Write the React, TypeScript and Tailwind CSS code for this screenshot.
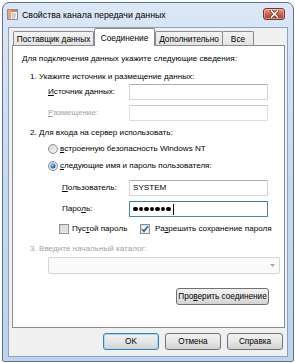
import React from "react";

const F = { fontFamily: '"Liberation Sans", Arial, sans-serif' };

function U({ c }: { c: string }) {
  return <span className="underline underline-offset-[1px] decoration-[1px]">{c}</span>;
}

function TextBox({ children, focused, disabled }: { children?: React.ReactNode; focused?: boolean; disabled?: boolean }) {
  const b = focused
    ? "border-[#4a86b8] border-t-[#3d7bad]"
    : disabled
    ? "border-[#dcdee3] border-t-[#c9cbd1]"
    : "border-[#d2d5db] border-t-[#abadb3]";
  return (
    <div className={`h-[16px] w-[139px] bg-white border ${b} flex items-center pl-[3px] rounded-[1px]`}>
      {children}
    </div>
  );
}

function Radio({ checked }: { checked?: boolean }) {
  return (
    <svg width="10" height="10" viewBox="0 0 10 10" className="shrink-0">
      <defs>
        <linearGradient id="rgbg" x1="0" y1="0" x2="1" y2="1">
          <stop offset="0" stopColor="#d0d0d0" />
          <stop offset="1" stopColor="#f8f8f8" />
        </linearGradient>
        <radialGradient id="rdot" cx="0.4" cy="0.35" r="0.7">
          <stop offset="0" stopColor="#a9d4f7" />
          <stop offset="0.5" stopColor="#3b7fce" />
          <stop offset="1" stopColor="#1c4f95" />
        </radialGradient>
      </defs>
      <circle cx="5" cy="5" r="4.5" fill="url(#rgbg)" stroke="#8e8f8f" strokeWidth="1" />
      {checked && <circle cx="5" cy="5" r="2.5" fill="url(#rdot)" />}
    </svg>
  );
}

function Check({ checked }: { checked?: boolean }) {
  return (
    <svg width="10" height="10" viewBox="0 0 10 10" className="shrink-0">
      <defs>
        <linearGradient id="cbg" x1="0" y1="0" x2="1" y2="1">
          <stop offset="0" stopColor="#cfcfcf" />
          <stop offset="1" stopColor="#f4f4f4" />
        </linearGradient>
      </defs>
      <rect x="0.5" y="0.5" width="9" height="9" fill="url(#cbg)" stroke="#8e8f8f" />
      <rect x="2" y="2" width="6" height="6" fill={checked ? "#eef3fa" : "#e0e0e0"} />
      {checked && <path d="M2.2 5.2 L4 7.2 L7.9 2.2" fill="none" stroke="#2d5fa4" strokeWidth="1.6" />}
    </svg>
  );
}

function Button({ children, def, className }: { children: React.ReactNode; def?: boolean; className?: string }) {
  return (
    <div
      className={`h-[17px] rounded-[3px] border ${
        def ? "border-[#3c7fb1] shadow-[inset_0_0_0_1px_#a8d8f6]" : "border-[#707070]"
      } bg-gradient-to-b from-[#f2f2f2] via-[#e6e6e6] to-[#d2d2d2] flex items-center justify-center text-[8.2px] leading-[10px] text-black ${className ?? ""}`}
    >
      {children}
    </div>
  );
}

function Tab({ label, selected, w }: { label: string; selected?: boolean; w: string }) {
  if (selected) {
    return (
      <div className={`relative z-10 h-[18px] -mb-[1px] ${w} border border-b-0 border-[#898c95] bg-white rounded-t-[2px] flex items-start pt-[4px] justify-center text-[8.3px] leading-[10px]`}>
        {label}
      </div>
    );
  }
  return (
    <div className={`h-[14px] ${w} border border-b-0 border-[#898c95] bg-gradient-to-b from-[#f3f3f3] to-[#e3e3e3] rounded-t-[2px] flex items-center justify-center text-[8.3px] leading-[10px]`}>
      {label}
    </div>
  );
}

export default function App() {
  return (
    <div className="w-[295px] h-[363px] bg-white overflow-hidden text-black" style={F}>
      <div className="ml-[2px] mt-[2px] w-[292px] h-[360px] rounded-t-[7px] rounded-b-[2px] border border-[#5d728d] bg-gradient-to-b from-[#dbe7f5] via-[#c7d9ef] to-[#bed3ec] flex flex-col">
        {/* Title bar */}
        <div className="h-[24px] flex items-start pl-[4px] pr-[8px]">
          <svg width="11" height="11" viewBox="0 0 11 11" className="mt-[6px] shrink-0">
            <rect x="0.5" y="0.5" width="10" height="10" fill="#fbfbfb" stroke="#8a8f99" />
            <rect x="1" y="1" width="9" height="2" fill="#e7804a" />
            <rect x="1" y="1" width="3" height="9" fill="#f0a46a" />
            <line x1="5" y1="5" x2="9" y2="5" stroke="#9aa3b0" />
            <line x1="5" y1="7" x2="9" y2="7" stroke="#9aa3b0" />
            <line x1="5" y1="9" x2="8" y2="9" stroke="#9aa3b0" />
          </svg>
          <span className="ml-[4px] mt-[6px] text-[8.8px] leading-[12px] whitespace-nowrap">Свойства канала передачи данных</span>
          <div className="flex-1" />
          <div className="mt-[5px] w-[22px] h-[12px] rounded-[3px] border border-[#7a3431] bg-gradient-to-b from-[#e2a192] via-[#c9604c] to-[#b8402c] flex items-center justify-center shadow-[inset_0_0_0_1px_rgba(255,210,200,0.5)]">
            <svg width="9" height="8" viewBox="0 0 9 8">
              <path d="M1.5 1 L7.5 7 M7.5 1 L1.5 7" stroke="#5c2a26" strokeWidth="2.8" strokeLinecap="square" />
              <path d="M1.5 1 L7.5 7 M7.5 1 L1.5 7" stroke="#ffffff" strokeWidth="1.6" strokeLinecap="square" />
            </svg>
          </div>
        </div>

        {/* Client */}
        <div className="mx-[5px] mb-[4px] flex-1 border border-[#8aa1bf] bg-[#f0f0f0] flex flex-col">
          {/* Tabs */}
          <div className="h-[17px] flex items-end pl-[4px]">
            <Tab label="Поставщик данных" w="w-[81px]" />
            <Tab label="Соединение" selected w="w-[61px]" />
            <Tab label="Дополнительно" w="w-[68px]" />
            <div className="-ml-[1px]">
              <Tab label="Все" w="w-[32px]" />
            </div>
          </div>

          {/* Panel */}
          <div className="ml-[3px] w-[273px] h-[283px] border border-[#898c95] bg-white flex flex-col text-[8.1px] leading-[14px]">
            <div className="mt-[6px] h-[14px] pl-[9px] whitespace-nowrap">Для подключения данных укажите следующие сведения:</div>
            <div className="mt-[4px] h-[14px] pl-[17px] whitespace-nowrap">1. Укажите источник и размещение данных:</div>

            <div className="mt-[0px] h-[16px] pl-[35px] flex items-center whitespace-nowrap">
              <div className="w-[81px]"><U c="И" />сточник данных:</div>
              <TextBox />
            </div>
            <div className="mt-[5px] h-[16px] pl-[35px] flex items-center whitespace-nowrap">
              <div className="w-[81px] text-[#a3a3a3]"><U c="Р" />азмещение:</div>
              <TextBox disabled />
            </div>

            <div className="mt-[5px] h-[14px] pl-[17px] whitespace-nowrap">2. Для входа на сервер использовать:</div>
            <div className="mt-[2px] h-[14px] pl-[35px] flex items-center gap-[2px] whitespace-nowrap">
              <Radio />
              <span><U c="в" />строенную безопасность Windows NT</span>
            </div>
            <div className="mt-[3px] h-[14px] pl-[35px] flex items-center gap-[2px] whitespace-nowrap">
              <Radio checked />
              <span><U c="с" />ледующие имя и пароль пользователя:</span>
            </div>

            <div className="mt-[7px] h-[16px] pl-[49px] flex items-center whitespace-nowrap">
              <div className="w-[67px]"><U c="П" />ользователь:</div>
              <TextBox>SYSTEM</TextBox>
            </div>
            <div className="mt-[5px] h-[16px] pl-[49px] flex items-center whitespace-nowrap">
              <div className="w-[67px]">Паро<U c="л" />ь:</div>
              <TextBox focused>
                <div className="flex items-center gap-[1px]">
                  {[0, 1, 2, 3, 4, 5, 6].map((i) => (
                    <span key={i} className="w-[4.5px] h-[4.5px] rounded-full bg-black" />
                  ))}
                  <span className="ml-[1px] w-[1px] h-[11px] bg-black" />
                </div>
              </TextBox>
            </div>

            <div className="mt-[5px] h-[14px] pl-[46px] flex items-center whitespace-nowrap">
              <div className="w-[81px] flex items-center">
                <Check />
                <span className="ml-[3px]">Пус<U c="т" />ой пароль</span>
              </div>
              <Check checked />
              <span className="ml-[5px]">Ра<U c="з" />решить сохранение пароля</span>
            </div>

            <div className="mt-[6px] h-[14px] pl-[17px] text-[#a3a3a3] whitespace-nowrap">3. Введите начальный каталог:</div>
            <div className="mt-[1px] pl-[35px]">
              <div className="w-[232px] h-[17px] border border-[#d5d5d5] rounded-[2px] bg-[#fafafa] flex items-center justify-end pr-[4px]">
                <svg width="5" height="3" viewBox="0 0 5 3">
                  <path d="M0 0 L5 0 L2.5 3 Z" fill="#a7a7a7" />
                </svg>
              </div>
            </div>

            <div className="mt-[14px] pl-[163px]">
              <Button className="w-[93px] h-[16px] whitespace-nowrap">
                <span>Про<U c="в" />ерить соединение</span>
              </Button>
            </div>
          </div>

          {/* Dialog buttons */}
          <div className="mt-[5px] flex justify-end gap-[6px] pr-[4px]">
            <Button def className="w-[56px]">OK</Button>
            <Button className="w-[56px]">Отмена</Button>
            <Button className="w-[56px]">Справка</Button>
          </div>
        </div>
      </div>
    </div>
  );
}
